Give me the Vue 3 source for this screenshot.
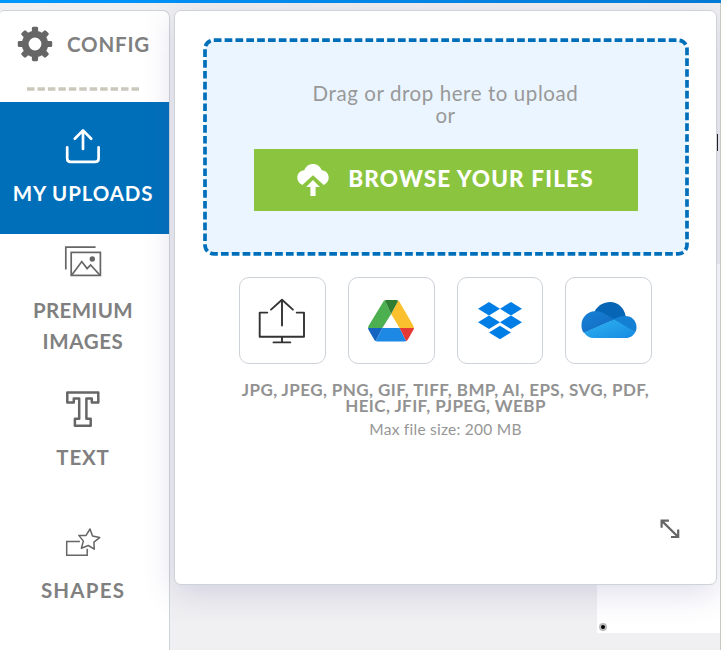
<script setup>
const dropboxTiles = ['11 0', '33 0', '11 13.5', '33 13.5', '22 23.7']
const teeth = [0, 45, 90, 135, 180, 225, 270, 315]
</script>

<template>
  <div class="editor">
    <div class="progress"></div>
    <div class="sheet"><span class="handle"></span></div>
    <div class="tick"></div>
    <div class="edge"></div>
    <div class="workspace">
      <nav class="sidebar">
        <div class="config">
          <svg class="gear" width="36" height="36" viewBox="-18 -18 36 36">
            <rect v-for="a in teeth" :key="a" x="-3.1" y="-17.2" width="6.2" height="9" rx="1.4" :transform="`rotate(${a})`" fill="#666" />
            <circle r="9.8" fill="none" stroke="#666" stroke-width="6.8" />
          </svg>
          <span class="label l-config">CONFIG</span>
        </div>
        <svg class="divider" width="112" height="4" viewBox="0 0 112 4">
          <path d="M0 2H112" stroke="#cbc8bd" stroke-width="3.4" stroke-dasharray="7.5 2.95" />
        </svg>
        <div class="item active">
          <svg width="36" height="36" viewBox="0 0 36 36" fill="none" stroke="#fff" stroke-width="2.7" stroke-linecap="round" stroke-linejoin="round">
            <path d="M2.2 19.3V30.5Q2.2 33.9 5.6 33.9H30.2Q33.6 33.9 33.6 30.5V19.3M18 21V3M9.8 10.7 18 2.4 26.2 10.7" />
          </svg>
          <span class="label l-uploads">MY UPLOADS</span>
        </div>
        <div class="item premium">
          <svg width="38" height="32" viewBox="0 0 38 32" fill="none" stroke="#666" stroke-width="1.7">
            <path d="M1.8 24.5V2.2H31.6" />
            <rect x="7.2" y="7.4" width="29.2" height="23" />
            <path d="M7.8 30 17.8 16.6 23.1 23.6 26.6 20 35.8 30" />
            <circle cx="28.3" cy="14" r="2.7" fill="#666" stroke="none" />
          </svg>
          <span class="label l-premium">PREMIUM</span>
          <span class="label l-images">IMAGES</span>
        </div>
        <div class="item text">
          <svg width="36" height="38" viewBox="0 0 36 38" fill="none" stroke="#666" stroke-width="2.5" stroke-linejoin="round">
            <path d="M2.3 2.4H33.3V12.4H26.8V8.6H21.4V28.8H25.7V35.7H9.9V28.8H14.2V8.6H8.8V12.4H2.3Z" />
          </svg>
          <span class="label l-text">TEXT</span>
        </div>
        <div class="item shapes">
          <svg width="36" height="30" viewBox="0 0 36 30" fill="none" stroke="#666" stroke-width="1.5">
            <path d="M14.9 14.5H1.7V28.2H22.2V21.8" />
            <path d="M25 2 27.5 9 34.7 10.6 28.9 15.1 29.3 22.2 23.3 18.5 16.4 21.2 18.4 14.1 13.8 8.4 21.1 8.4Z" stroke-linejoin="round" />
          </svg>
          <span class="label l-shapes">SHAPES</span>
        </div>
      </nav>

      <main class="panel">
        <section class="dropzone">
          <svg class="dashes" width="486" height="218" viewBox="0 0 486 218">
            <rect x="2" y="2.2" width="482" height="213.6" rx="8.8" fill="#eaf5ff" stroke="#006fba" stroke-width="3.7" pathLength="1270" stroke-dasharray="7.1 2.9" />
          </svg>
          <p class="hint drag">Drag or drop here to upload</p>
          <p class="hint or">or</p>
          <button class="browse">
            <svg width="32" height="34" viewBox="0 0 32 34" fill="#fff">
              <path d="M5.3 22C1.9 20.4.3 17.7.3 14.5.3 10.7 3.5 7.3 7.3 7.2 8.9 3 12.2 1 16 1S23.1 3 24.7 7.2C28.6 7.3 31.7 10.7 31.7 14.5 31.7 17.7 30.1 20.4 26.7 22L16 12.2Z" />
              <path d="M16 17 22.9 24.1H18.6V33H13.4V24.1H9.1Z" />
            </svg>
            <span class="browse-text">BROWSE YOUR FILES</span>
          </button>
        </section>

        <section class="sources">
          <button class="source">
            <svg width="48" height="46" viewBox="0 0 48 46" fill="none" stroke="#333" stroke-width="1.9" stroke-linecap="round" stroke-linejoin="round">
              <path d="M9.3 14.6H1.7V38.7H46V14.6H38.7M24 27.5V1.8M13 11.6 24 1.8 34.9 11.6M24 38.7V44.4M15.5 44.4H32.3" />
            </svg>
          </button>
          <button class="source">
            <svg width="46" height="42" viewBox="0 0 46 42">
              <path d="M16.8.3Q15.9.6 15.4 1.4L.8 25.5Q.1 26.7.1 27.9H14.4L23.1 13.9Z" fill="#4caf50" />
              <path d="M30.2.7 23.1 13.9 31.6 27.9H45.9Q45.9 26.7 45.2 25.5L31.6 1.9Q31 .9 30.2.7Z" fill="#fbc02d" />
              <path d="M16.8.3Q17.3 0 18.4 0H28.1Q29.5 0 30.2.7L23.1 13.9Z" fill="#2e7d32" />
              <path d="M.1 27.9Q.1 29 .8 30.2L6.1 39.4Q6.7 40.4 7.8 41L14.4 27.9Z" fill="#1565c0" />
              <path d="M14.4 27.9H31.6L38.2 41Q37.4 41.6 36.2 41.6H9.8Q8.6 41.6 7.8 41Z" fill="#1e88e5" />
              <path d="M31.6 27.9H45.9Q45.9 29 45.2 30.2L39.9 39.4Q39.3 40.4 38.2 41Z" fill="#e53935" />
            </svg>
          </button>
          <button class="source">
            <svg width="44" height="38" viewBox="0 0 44 38" fill="#007ee5">
              <path v-for="t in dropboxTiles" :key="t" d="M0 0 11 6.8 0 13.6-11 6.8Z" :transform="`translate(${t})`" />
            </svg>
          </button>
          <button class="source">
            <svg width="56" height="38" viewBox="0 0 56 38">
              <defs>
                <linearGradient id="mid" x1="0" y1="0" x2="1" y2="1"><stop offset="0" stop-color="#1781d7" /><stop offset="1" stop-color="#1269be" /></linearGradient>
                <linearGradient id="low" x1="0" y1="0" x2="1" y2="1"><stop offset="0" stop-color="#30b3f1" /><stop offset="1" stop-color="#168be2" /></linearGradient>
              </defs>
              <path d="M13.5 9.5C17 3.5 22.5.1 29 .1 36.8.1 43.3 6 44.7 14.2L34 21Z" fill="#0665b4" />
              <path d="M13.5 9.3Q18.5 8.6 22.5 11L33.8 17.5 3 31C1 28.800.4 26 .5 23.2.5 15.5 6.4 9.6 13.5 9.3Z" fill="url(#mid)" />
              <path d="M32.8 17C37.1 15.3 40 14 44.5 14.1 50.7 14.1 55.5 19 55.5 25 55.5 27 55.2 28.5 54.3 30.2L31.5 18.2Z" fill="#1380d4" />
              <path d="M3 30.5 33.2 17.6 54.3 30C52.5 33.7 49 36 45 36H12.5C8.5 36 5 34 3 30.5Z" fill="url(#low)" />
            </svg>
          </button>
        </section>

        <p class="formats f1">JPG, JPEG, PNG, GIF, TIFF, BMP, AI, EPS, SVG, PDF,</p>
        <p class="formats f2">HEIC, JFIF, PJPEG, WEBP</p>
        <p class="limit">Max file size: 200 MB</p>

        <svg class="resize" width="20" height="20" viewBox="0 0 20 20" fill="none" stroke="#666" stroke-width="2.2">
          <path d="M1.6 8.7V1.6H8.9M11 18H18.2V10.6M1.6 1.6 18.2 18" />
        </svg>
      </main>
    </div>
  </div>
</template>

<style>
body { margin: 0; overflow: hidden; }
</style>

<style scoped>
* { box-sizing: border-box; }
p { margin: 0; }
button { font: inherit; padding: 0; border: 0; display: flex; align-items: center; justify-content: center; }
svg { display: block; flex: none; }
.editor { position: relative; width: 721px; height: 650px; overflow: hidden; background: #f0f0f2; font-family: Lato, "Liberation Sans", sans-serif; }
.progress { height: 3px; background: linear-gradient(90deg, #0097ff, #007bd7); }
.sheet { position: absolute; left: 597px; top: 264px; width: 123px; height: 369px; background: #fff; }
.handle { position: absolute; left: 2px; bottom: 2px; width: 8px; height: 8px; border-radius: 50%; background: #000; border: 2px solid #bbb; }
.tick { position: absolute; z-index: 3; left: 717px; top: 134px; width: 1px; height: 17px; background: #222; }
.edge { position: absolute; z-index: 3; left: 720px; top: 3px; width: 1px; height: 647px; background: #cbc9c4; }
.workspace { position: relative; display: flex; gap: 4px; padding-top: 7px; height: 647px; }
.sidebar { width: 170px; height: 640px; background: #fff; border-top: 1px solid #ced3da; border-right: 1px solid #ced3da; border-radius: 4px 7px 0 0; display: flex; flex-direction: column; overflow: hidden; }
.config { display: flex; align-items: center; height: 66px; padding-left: 16.5px; gap: 14.5px; }
.divider { margin: 10px 0 0 27px; }
.label { display: block; white-space: nowrap; font-weight: 700; font-size: 20.5px; line-height: 31px; letter-spacing: .8px; color: #808080; }
.item { display: flex; flex-direction: column; align-items: center; padding-right: 3px; }
.active { margin-top: 11px; height: 132px; padding-top: 26px; background: #006fba; }
.active .label { color: #fff; margin-top: 14px; letter-spacing: .85px; }
.premium { height: 154px; padding-top: 11px; }
.premium svg { margin-bottom: 18px; }
.l-premium { letter-spacing: .3px; }
.l-images { letter-spacing: .6px; }
.text { height: 139px; padding-top: 2px; }
.text svg { margin-bottom: 14px; }
.shapes svg { margin-bottom: 18px; }
.l-shapes { letter-spacing: 1.2px; }
.panel { position: relative; width: 543px; height: 575px; background: #fff; border: 1px solid #ced3da; border-radius: 7px; box-shadow: 0 8px 32px rgba(90, 80, 150, .2); display: flex; flex-direction: column; align-items: center; }
.dropzone { position: relative; width: 486px; height: 218px; margin-top: 27px; display: flex; flex-direction: column; align-items: center; padding-top: 44px; }
.dashes { position: absolute; left: 0; top: 0; }
.hint { position: relative; font-size: 20.5px; line-height: 22px; color: #999; letter-spacing: .58px; white-space: nowrap; }
.browse { position: relative; width: 384px; height: 62px; margin-top: 23px; padding-bottom: 2px; background: #8bc53f; color: #fff; gap: 19px; }
.browse svg { margin-top: 2px; }
.browse-text { font-size: 22.5px; font-weight: 900; letter-spacing: 1.15px; white-space: nowrap; line-height: 26px; }
.sources { display: grid; grid-template-columns: repeat(4, 86.7px); gap: 22px; margin-top: 21px; }
.source { height: 87px; background: #fff; border: 1px solid #cdd2d8; border-radius: 10px; }
.formats { font-size: 17px; font-weight: 700; line-height: 16px; letter-spacing: .41px; color: #929292; white-space: nowrap; }
.f1 { margin-top: 18px; }
.limit { font-size: 15.5px; line-height: 20px; letter-spacing: .25px; margin-top: 5px; color: #969696; white-space: nowrap; }
.resize { margin: 80px 0 0 448px; }
</style>
